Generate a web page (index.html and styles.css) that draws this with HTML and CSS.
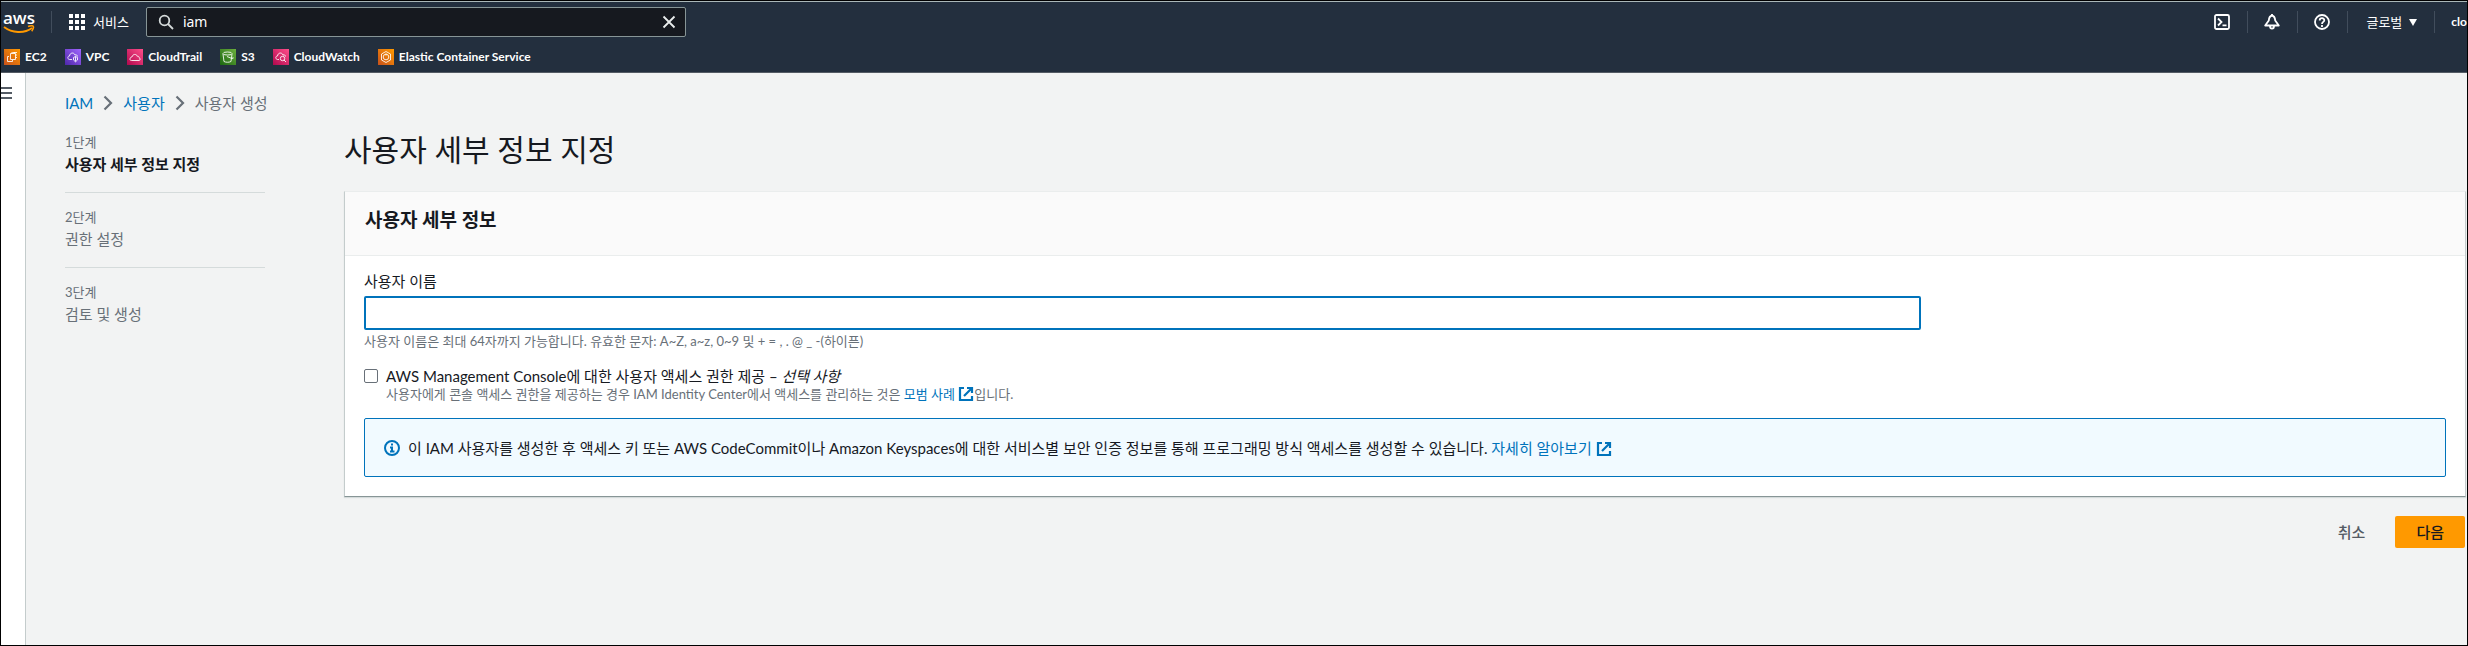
FILE: index.html
```html
<!DOCTYPE html>
<html lang="ko">
<head>
<meta charset="utf-8">
<title>사용자 생성 | IAM</title>
<link rel="stylesheet" href="styles.css">
</head>
<body>
<svg class="defs" aria-hidden="true">
  <defs>
    <linearGradient id="g-orange" x1="0" y1="1" x2="1" y2="0"><stop offset="0" stop-color="#c8511b"/><stop offset="1" stop-color="#f90"/></linearGradient>
    <linearGradient id="g-purple" x1="0" y1="1" x2="1" y2="0"><stop offset="0" stop-color="#4d27a8"/><stop offset="1" stop-color="#a166ff"/></linearGradient>
    <linearGradient id="g-pink" x1="0" y1="1" x2="1" y2="0"><stop offset="0" stop-color="#b0084d"/><stop offset="1" stop-color="#ff4f8b"/></linearGradient>
    <linearGradient id="g-green" x1="0" y1="1" x2="1" y2="0"><stop offset="0" stop-color="#1b660f"/><stop offset="1" stop-color="#6cae3e"/></linearGradient>
    <symbol id="external" viewBox="0 0 16 16"><path d="M6 2H2v12h12v-4M9 2h5v5M6 10l7.5-7.500" fill="none" stroke="currentColor" stroke-width="2.200"/></symbol>
    <symbol id="chevron" viewBox="0 0 10 16"><path d="M1.500 1.500L8 8l-6.500 6.500" fill="none" stroke="currentColor" stroke-width="2.200"/></symbol>
  </defs>
</svg>
<header class="top">
  <div class="bar">
    <a class="logo" href="#" aria-label="aws">
      <span class="logo-text">aws</span>
      <svg class="smile" viewBox="0 0 32 9" fill="none" stroke="#f90" stroke-width="2"><path d="M1 2c8 6 20 7 28 1"/><path d="M25 1.500c3-1 5-.7 5.300-.2s-.1 3-1.600 5" stroke-width="1.500"/></svg>
    </a>
    <span class="rule"></span>
    <button class="services" type="button">
      <svg class="i16" viewBox="0 0 16 16" fill="#fff"><path d="M0 0h4v4H0zM6 0h4v4H6zM12 0h4v4h-4zM0 6h4v4H0zM6 6h4v4H6zM12 6h4v4h-4zM0 12h4v4H0zM6 12h4v4H6zM12 12h4v4h-4z"/></svg>
      서비스
    </button>
    <label class="search">
      <svg class="i16" viewBox="0 0 16 16" fill="none" stroke="#d5dbdb" stroke-width="1.800"><circle cx="6.500" cy="6.500" r="4.800"/><path d="M10 10l5 5"/></svg>
      <input type="text" value="iam" aria-label="검색">
      <button type="button" class="clear" aria-label="지우기"><svg class="i16" viewBox="0 0 16 16" fill="none" stroke="#eaeded" stroke-width="1.800"><path d="M2.500 2.500l11 11M13.500 2.500l-11 11"/></svg></button>
    </label>
    <div class="tools">
      <button type="button" aria-label="CloudShell"><svg class="i16" viewBox="0 0 16 16" fill="none" stroke="#fff" stroke-width="1.800"><rect x="1" y="1" width="14" height="14" rx="1.500"/><path d="M4 4.500L7.500 8 4 11.500M8.500 11.300h4"/></svg></button>
      <span class="rule"></span>
      <button type="button" aria-label="알림"><svg class="i16" viewBox="0 0 16 16" fill="none" stroke="#fff" stroke-width="1.800"><path d="M8 1.500C5.500 2 5 4 4.800 6.500L1.200 11.500h13.600L11.200 6.500C11 4 10.500 2 8 1.500z" stroke-linejoin="round"/><path d="M8 0v2M6 12c0 3.500 4 3.500 4 0"/></svg></button>
      <span class="rule"></span>
      <button type="button" aria-label="도움말"><svg class="i16" viewBox="0 0 16 16" fill="none" stroke="#fff" stroke-width="1.800"><circle cx="8" cy="8" r="7"/><path d="M5.700 6.500c0-3 4.600-3 4.600-.3C10.300 8 8 7.800 8 10M8 11v2"/></svg></button>
      <span class="rule"></span>
      <button type="button" class="region">글로벌 <svg class="caret" viewBox="0 0 8 7"><path d="M0 0h8L4 7z" fill="#fff"/></svg></button>
      <span class="rule"></span>
      <button type="button" class="account">clo</button>
    </div>
  </div>
  <nav class="favorites">
    <a href="#"><svg class="i16" viewBox="0 0 16 16"><path fill="url(#g-orange)" d="M0 0h16v16H0z"/><g fill="none" stroke="#fff" stroke-opacity=".85"><path d="M6.500 4.500h5v6h-5zM5 7.500H3.500v5h5V11M8 3v1.500M10.500 3v1.500M11.500 6H13M11.500 8.500H13M8.500 3.500h4.500"/></g></svg>EC2</a>
    <a href="#"><svg class="i16" viewBox="0 0 16 16"><path fill="url(#g-purple)" d="M0 0h16v16H0z"/><g fill="none" stroke="#fff" stroke-opacity=".85"><path d="M7 10.500H4.500c-2.500-.5-2-3.500 0-3.500.3-3.500 4.500-4 5.500-1 1.500-.5 2.500.3 2.500 1.500"/><path d="M8.500 8.500l2-1 2 1v2.500l-2 1.800-2-1.800zM10.500 7.500v5"/></g></svg>VPC</a>
    <a href="#"><svg class="i16" viewBox="0 0 16 16"><path fill="url(#g-pink)" d="M0 0h16v16H0z"/><path fill="none" stroke="#fff" stroke-opacity=".85" d="M3 10.500c0-2 1-2.500 2-2.500.5-3 4.500-3.500 5.200-.8 1.300-.2 1.800.5 1.800 1.300 1.500.5 1.500 3 0 3H4.500c-1 0-1.500-.5-1.500-1z"/></svg>CloudTrail</a>
    <a href="#"><svg class="i16" viewBox="0 0 16 16"><path fill="url(#g-green)" d="M0 0h16v16H0z"/><g fill="none" stroke="#fff" stroke-opacity=".85"><ellipse cx="7.500" cy="4.500" rx="4.500" ry="1.500"/><path d="M3 5l1 7.500c2 1 5 1 7 0L12 5M7 7.500l5 2c1.500.5 1.500-.7.500-1.500"/></g></svg>S3</a>
    <a href="#"><svg class="i16" viewBox="0 0 16 16"><path fill="url(#g-pink)" d="M0 0h16v16H0z"/><g fill="none" stroke="#fff" stroke-opacity=".85"><path d="M6 10.500H4.500c-2.500-.5-2-3.500 0-3.500.3-3.500 4.500-4 5.500-1 1.500-.5 2.500.3 2.500 1.500"/><circle cx="9.500" cy="9.500" r="2.200"/><path d="M11 11l2 2"/></g></svg>CloudWatch</a>
    <a href="#"><svg class="i16" viewBox="0 0 16 16"><path fill="url(#g-orange)" d="M0 0h16v16H0z"/><g fill="none" stroke="#fff" stroke-opacity=".85"><path d="M8 2.500l4.500 2.500v6L8 13.500 3.500 11V5z"/><circle cx="8" cy="8" r="2.800"/><path d="M8 4.500v2"/></g></svg>Elastic Container Service</a>
  </nav>
</header>
<div class="shell">
  <aside class="rail"><button type="button" class="menu" aria-label="메뉴 열기"></button></aside>
  <div class="page">
    <nav class="crumbs" aria-label="이동 경로">
      <a href="#">IAM</a><svg class="chev"><use href="#chevron"/></svg><a href="#">사용자</a><svg class="chev"><use href="#chevron"/></svg><span>사용자 생성</span>
    </nav>
    <div class="columns">
      <ol class="steps">
        <li class="current"><small>1단계</small><span>사용자 세부 정보 지정</span></li>
        <li><small>2단계</small><span>권한 설정</span></li>
        <li><small>3단계</small><span>검토 및 생성</span></li>
      </ol>
      <main class="content">
        <h1>사용자 세부 정보 지정</h1>
        <section class="panel">
          <h2>사용자 세부 정보</h2>
          <div class="fields">
            <label class="name-label" for="user-name">사용자 이름</label>
            <input class="name" id="user-name" type="text">
            <p class="hint">사용자 이름은 최대 64자까지 가능합니다. 유효한 문자: A~Z, a~z, 0~9 및 + = , . @ _ -(하이픈)</p>
            <div class="check">
              <input type="checkbox" id="console">
              <div>
                <label for="console">AWS Management Console에 대한 사용자 액세스 권한 제공 – <i>선택 사항</i></label>
                <p class="hint">사용자에게 콘솔 액세스 권한을 제공하는 경우 IAM Identity Center에서 액세스를 관리하는 것은 <a href="#">모범 사례 <svg class="ext"><use href="#external"/></svg></a>입니다.</p>
              </div>
            </div>
            <div class="alert">
              <svg class="i16" viewBox="0 0 16 16" fill="none" stroke="#0073bb" stroke-width="2"><circle cx="8" cy="8" r="7"/><path d="M8 3.500v2M6 7.500h2v4M6 11.500h4.500"/></svg>
              <p>이 IAM 사용자를 생성한 후 액세스 키 또는 AWS CodeCommit이나 Amazon Keyspaces에 대한 서비스별 보안 인증 정보를 통해 프로그래밍 방식 액세스를 생성할 수 있습니다. <a href="#">자세히 알아보기 <svg class="ext"><use href="#external"/></svg></a></p>
            </div>
          </div>
        </section>
        <div class="actions">
          <button type="button" class="cancel">취소</button>
          <button type="button" class="next">다음</button>
        </div>
      </main>
    </div>
  </div>
</div>
</body>
</html>
```
FILE: styles.css
```css
* { box-sizing: border-box; margin: 0; padding: 0; }
body {
  display: flex;
  flex-direction: column;
  min-height: 100vh;
  border: 1px solid #000;
  background: #f2f3f3;
  color: #16191f;
  font: 15px/22px Lato, "Noto Sans CJK KR", sans-serif;
}
button { border: 0; background: none; color: inherit; font: inherit; white-space: nowrap; }
a { color: #0073bb; text-decoration: none; }
svg { flex: none; }
.defs { position: absolute; width: 0; height: 0; }
.i16 { display: block; width: 16px; height: 16px; }

.top { border-top: 1px solid #aab7b8; border-bottom: 1px solid #545b64; background: #232f3e; color: #fff; }
.bar { display: flex; align-items: center; height: 40px; font-size: 13px; }
.logo { display: flex; flex-direction: column; width: 32px; margin: 0 16px 0 2px; color: #fff; }
.logo-text { font: 600 17px/14px "Open Sans", sans-serif; }
.smile { width: 32px; height: 9px; }
.rule { flex: none; width: 1px; height: 22px; background: #414d5c; }
.services { display: flex; align-items: center; gap: 8px; margin: 0 17px 0 17px; }
.search { display: flex; align-items: center; gap: 9px; width: 540px; height: 30px; padding: 0 8px 0 11px; border: 1px solid #879596; border-radius: 2px; background: #16191f; }
.search input { flex: 1; min-width: 0; border: 0; outline: 0; background: none; color: #fff; font: 14px/22px "Noto Sans", "Noto Sans CJK KR", sans-serif; }
.tools { display: flex; align-items: center; margin-left: auto; }
.tools button { padding: 0 17px 0 16px; }
.tools .region { display: flex; align-items: center; gap: 7px; padding: 0 17px 0 18px; }
.caret { width: 8px; height: 7px; }
.tools .account { padding: 0 0 0 16px; font-size: 12px; font-weight: 700; }
.favorites { display: flex; gap: 18px; height: 30px; padding: 7px 3px 0; }
.favorites a { display: flex; gap: 5px; color: #fff; font-size: 12px; font-weight: 700; line-height: 16px; }

.shell { display: flex; flex: 1; }
.rail { width: 25px; flex: none; border-right: 1px solid #c4cccc; background: #fff; }
.menu { display: block; width: 11px; height: 12px; margin-top: 14px; border-top: 2px solid #545b64; border-bottom: 2px solid #545b64; background: linear-gradient(#545b64, #545b64) 0 3px / 100% 2px no-repeat; }
.page { flex: 1; min-width: 0; padding: 19px 1px 0 39px; }
.crumbs { display: flex; align-items: center; gap: 10px; color: #687078; }
.chev { width: 10px; height: 16px; }
.columns { display: flex; gap: 79px; }
.steps { flex: none; width: 200px; padding-top: 17px; list-style: none; color: #687078; }
.steps li:not(:last-child) { height: 62px; margin-bottom: 13px; border-bottom: 1px solid #d5dbdb; }
.steps small { display: block; font-size: 13px; line-height: 22px; }
.steps .current span { color: #16191f; font-weight: 700; }
.content { flex: 1; min-width: 0; }
h1 { margin: 14px 0 21px; font-size: 30px; font-weight: 400; line-height: 42px; }
.panel { border: 1px solid #eaeded; border-left-color: #c4cccc; border-right-color: #c4cccc; border-bottom-color: #879596; background: #fff; box-shadow: 0 1px 1px #d5dbdb; }
h2 { padding: 13px 20px 20px; border-bottom: 1px solid #eaeded; background: #fafafa; font-size: 19px; line-height: 30px; }
.fields { padding: 14px 19px 19px; }
.name-label { display: block; }
.name { display: block; width: calc(75% - 5px); height: 34px; margin-top: 4px; border: 2px solid #0073bb; border-radius: 2px; outline: 0; background: #fff; }
.hint { color: #687078; font-size: 13px; line-height: 22px; }
.check { display: flex; gap: 8px; margin: 14px 0 16px; line-height: 20px; }
.check input { appearance: none; flex: none; width: 14px; height: 14px; margin-top: 3px; border: 1px solid #687078; border-radius: 2px; background: #fff; }
.check .hint { line-height: 16px; }
.ext { display: inline-block; width: 16px; height: 16px; vertical-align: -3px; }
.alert { display: flex; align-items: center; gap: 8px; height: 59px; padding: 0 19px; border: 1px solid #0073bb; border-radius: 2px; background: #f1faff; }
.actions { display: flex; justify-content: flex-end; gap: 30px; margin: 19px 1px 0 0; font-weight: 500; }
.cancel { color: #545b64; }
.next { height: 32px; padding: 0 21px; border-radius: 2px; background: #f90; }
```
